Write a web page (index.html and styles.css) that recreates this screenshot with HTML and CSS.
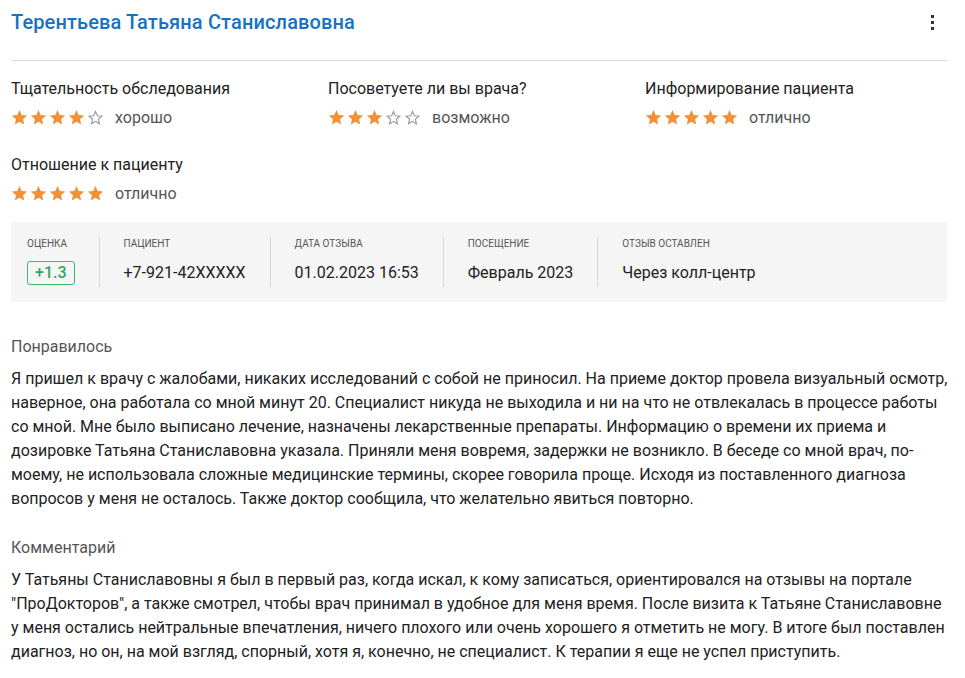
FILE: index.html
```html
<!DOCTYPE html>
<html lang="ru">
<head>
<meta charset="utf-8">
<link rel="stylesheet" href="styles.css">
</head>
<body>
<svg width="0" height="0" class="defs">
  <defs>
    <symbol id="star" viewBox="0 0 24 24"><path d="M12 1.5l3.1 7.1 7.7.7-5.8 5.1 1.7 7.6L12 18l-6.7 4 1.7-7.6L1.2 9.3l7.7-.7z"/></symbol>
  </defs>
</svg>
<div class="review">
  <div class="head">
    <h1 class="name">Терентьева Татьяна Станиславовна</h1>
    <button class="kebab" aria-label="menu"><span></span><span></span><span></span></button>
  </div>
  <div class="ratings">
    <div class="rating">
      <div class="r-label">Тщательность обследования</div>
      <div class="r-row">
        <span class="stars">
          <svg class="star on"><use href="#star"/></svg><svg class="star on"><use href="#star"/></svg><svg class="star on"><use href="#star"/></svg><svg class="star on"><use href="#star"/></svg><svg class="star off" viewBox="0 0 24 24"><path d="M12 3.5l2.6 6 6.4.6-4.9 4.3 1.5 6.4L12 17.4l-5.6 3.4 1.5-6.4L3 10.1l6.4-.6z"/></svg>
        </span>
        <span class="r-text">хорошо</span>
      </div>
    </div>
    <div class="rating">
      <div class="r-label">Посоветуете ли вы врача?</div>
      <div class="r-row">
        <span class="stars">
          <svg class="star on"><use href="#star"/></svg><svg class="star on"><use href="#star"/></svg><svg class="star on"><use href="#star"/></svg><svg class="star off" viewBox="0 0 24 24"><path d="M12 3.5l2.6 6 6.4.6-4.9 4.3 1.5 6.4L12 17.4l-5.6 3.4 1.5-6.4L3 10.1l6.4-.6z"/></svg><svg class="star off" viewBox="0 0 24 24"><path d="M12 3.5l2.6 6 6.4.6-4.9 4.3 1.5 6.4L12 17.4l-5.6 3.4 1.5-6.4L3 10.1l6.4-.6z"/></svg>
        </span>
        <span class="r-text">возможно</span>
      </div>
    </div>
    <div class="rating">
      <div class="r-label">Информирование пациента</div>
      <div class="r-row">
        <span class="stars">
          <svg class="star on"><use href="#star"/></svg><svg class="star on"><use href="#star"/></svg><svg class="star on"><use href="#star"/></svg><svg class="star on"><use href="#star"/></svg><svg class="star on"><use href="#star"/></svg>
        </span>
        <span class="r-text">отлично</span>
      </div>
    </div>
    <div class="rating">
      <div class="r-label">Отношение к пациенту</div>
      <div class="r-row">
        <span class="stars">
          <svg class="star on"><use href="#star"/></svg><svg class="star on"><use href="#star"/></svg><svg class="star on"><use href="#star"/></svg><svg class="star on"><use href="#star"/></svg><svg class="star on"><use href="#star"/></svg>
        </span>
        <span class="r-text">отлично</span>
      </div>
    </div>
  </div>
  <div class="info">
    <div class="cell first">
      <div class="c-label">Оценка</div>
      <div class="c-value"><span class="badge">+1.3</span></div>
    </div>
    <div class="cell">
      <div class="c-label">Пациент</div>
      <div class="c-value">+7-921-42XXXXX</div>
    </div>
    <div class="cell">
      <div class="c-label">Дата отзыва</div>
      <div class="c-value">01.02.2023 16:53</div>
    </div>
    <div class="cell">
      <div class="c-label">Посещение</div>
      <div class="c-value">Февраль 2023</div>
    </div>
    <div class="cell">
      <div class="c-label">Отзыв оставлен</div>
      <div class="c-value">Через колл-центр</div>
    </div>
  </div>
  <div class="section">
    <div class="s-title">Понравилось</div>
    <p class="s-text">Я пришел к врачу с жалобами, никаких исследований с собой не приносил. На приеме доктор провела визуальный осмотр, наверное, она работала со мной минут 20. Специалист никуда не выходила и ни на что не отвлекалась в процессе работы со мной. Мне было выписано лечение, назначены лекарственные препараты. Информацию о времени их приема и дозировке Татьяна Станиславовна указала. Приняли меня вовремя, задержки не возникло. В беседе со мной врач, по-моему, не использовала сложные медицинские термины, скорее говорила проще. Исходя из поставленного диагноза вопросов у меня не осталось. Также доктор сообщила, что желательно явиться повторно.</p>
  </div>
  <div class="section">
    <div class="s-title">Комментарий</div>
    <p class="s-text">У Татьяны Станиславовны я был в первый раз, когда искал, к кому записаться, ориентировался на отзывы на портале "ПроДокторов", а также смотрел, чтобы врач принимал в удобное для меня время. После визита к Татьяне Станиславовне у меня остались нейтральные впечатления, ничего плохого или очень хорошего я отметить не могу. В итоге был поставлен диагноз, но он, на мой взгляд, спорный, хотя я, конечно, не специалист. К терапии я еще не успел приступить.</p>
  </div>
</div>
</body>
</html>
```

FILE: styles.css
```css
* { box-sizing: border-box; }
html, body { margin: 0; padding: 0; background: #fff; }
body {
  font-family: Roboto, "Noto Sans", "Liberation Sans", sans-serif;
  color: #222;
}
.defs { position: absolute; width: 0; height: 0; overflow: hidden; }
.review {
  width: 936px;
  margin-left: 11px;
}
.head {
  display: flex;
  align-items: center;
  justify-content: space-between;
  height: 61px;
  border-bottom: 1px solid #dcdcdc;
  padding-bottom: 16px;
}
.name {
  margin: 0;
  font-size: 20px;
  font-weight: 500;
  color: #1572c4;
  line-height: 28px;
  letter-spacing: 0.13px;
}
.kebab {
  border: 0;
  background: none;
  padding: 0;
  width: 20px;
  height: 20px;
  display: flex;
  flex-direction: column;
  align-items: center;
  justify-content: center;
  gap: 3px;
  margin-right: 5px;
}
.kebab span {
  display: block;
  width: 3px;
  height: 3px;
  background: #333;
}
.ratings {
  display: grid;
  grid-template-columns: 317px 317px 302px;
  padding-top: 17px;
  row-gap: 24px;
}
.r-label {
  font-size: 16px;
  line-height: 22px;
  color: #222;
}
.r-row {
  display: flex;
  align-items: center;
  margin-top: 4px;
  height: 26px;
}
.stars {
  display: flex;
  align-items: center;
  gap: 2px;
}
.star { width: 17px; height: 17px; display: block; }
.star.on { fill: #f09138; }
.star.off { fill: none; stroke: #9a9a9a; stroke-width: 1.6; width: 17px; height: 17px; }
.r-text {
  font-size: 16px;
  color: #555;
  margin-left: 11px;
}
.info {
  margin-top: 16px;
  background: #f5f5f5;
  height: 80px;
  display: flex;
  align-items: center;
}
.cell {
  padding: 0 24px;
  border-left: 1px solid #d8d8d8;
  height: 50px;
  display: flex;
  flex-direction: column;
  justify-content: flex-start;
}
.cell.first { border-left: 0; padding-left: 16px; }
.c-label {
  font-size: 10px;
  text-transform: uppercase;
  color: #555;
  line-height: 12px;
  margin-top: 1px;
}
.c-value {
  font-size: 16px;
  color: #222;
  line-height: 24px;
  margin-top: 11px;
  white-space: nowrap;
}
.badge {
  display: inline-block;
  border: 1px solid #3dba6f;
  color: #2ea85f;
  border-radius: 3px;
  font-weight: 500;
  font-size: 16px;
  line-height: 22px;
  padding: 0 7px;
}
.section { margin-top: 33px; }
.section + .section { margin-top: 25px; }
.s-title {
  font-size: 16px;
  line-height: 24px;
  color: #555;
}
.s-text {
  margin: 8px -2px 0 0;
  font-size: 16px;
  line-height: 24px;
  color: #222;
}
```
